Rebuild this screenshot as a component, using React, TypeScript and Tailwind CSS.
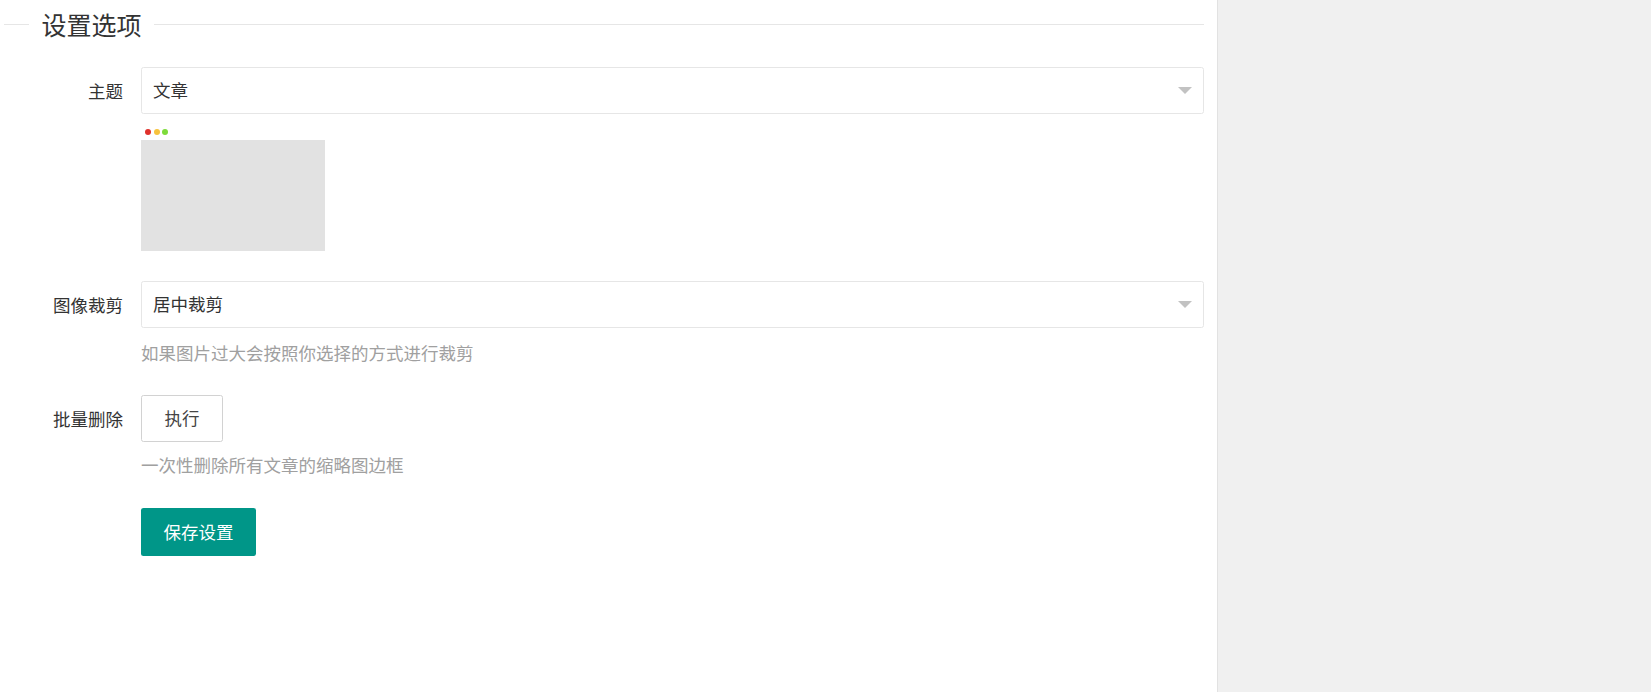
import React from 'react';

const font = { fontFamily: '"Noto Sans CJK SC", "Noto Sans", sans-serif' };

function Select({ value }: { value: string }) {
  return (
    <div className="flex h-[47px] items-center justify-between rounded-[2.5px] border border-[#e6e6e6] bg-white pl-[11px] pr-[11px]">
      <span className="text-[17.5px] text-[#333]">{value}</span>
      <span className="h-0 w-0 border-x-[7px] border-t-[7px] border-x-transparent border-t-[#c2c2c2]" />
    </div>
  );
}

function Row({ label, children, className = '' }: { label: string; children: React.ReactNode; className?: string }) {
  return (
    <div className={`flex ${className}`}>
      <label className="h-[47px] w-[119px] flex-none text-right text-[17.5px] leading-[47px] text-[#333]">{label}</label>
      <div className="ml-[18px] flex-1">{children}</div>
    </div>
  );
}

export default function App() {
  return (
    <div className="flex h-screen w-full overflow-hidden" style={font}>
      <main className="w-[1218px] flex-none border-r border-[#e2e2e2] bg-white pl-[4px] pr-[13px]">
        {/* 标题 */}
        <div className="flex h-[48px] items-center">
          <div className="h-px w-[25px] flex-none bg-[#e6e6e6]" />
          <span className="px-[12.5px] text-[25px] leading-none text-[#333]">设置选项</span>
          <div className="h-px flex-1 bg-[#e6e6e6]" />
        </div>

        {/* 主题 */}
        <Row label="主题" className="mt-[19px]">
          <Select value="文章" />
          <div className="mt-[15px] flex gap-[2.5px] pl-[4px]">
            <span className="h-[6px] w-[6px] rounded-full bg-[#e0312b]" />
            <span className="h-[6px] w-[6px] rounded-full bg-[#f7c23c]" />
            <span className="h-[6px] w-[6px] rounded-full bg-[#7ddb3a]" />
          </div>
          <div className="mt-[5px] h-[111px] w-[184px] bg-[#e2e2e2]" />
        </Row>

        {/* 图像裁剪 */}
        <Row label="图像裁剪" className="mt-[30px]">
          <Select value="居中裁剪" />
          <p className="mt-[12px] text-[17.5px] leading-[25px] text-[#a0a0a0]">如果图片过大会按照你选择的方式进行裁剪</p>
        </Row>

        {/* 批量删除 */}
        <Row label="批量删除" className="mt-[30px]">
          <button className="h-[47px] rounded-[2.5px] border border-[#d2d2d2] bg-white px-[22.5px] text-[17.5px] text-[#444]">
            执行
          </button>
          <p className="mt-[10px] text-[17.5px] leading-[25px] text-[#a0a0a0]">一次性删除所有文章的缩略图边框</p>
          <button className="mt-[31px] h-[48px] rounded-[2.5px] bg-[#009688] px-[22.5px] text-[17.5px] text-white">
            保存设置
          </button>
        </Row>
      </main>
      <aside className="flex-1 bg-[#f0f0f0]" />
    </div>
  );
}
